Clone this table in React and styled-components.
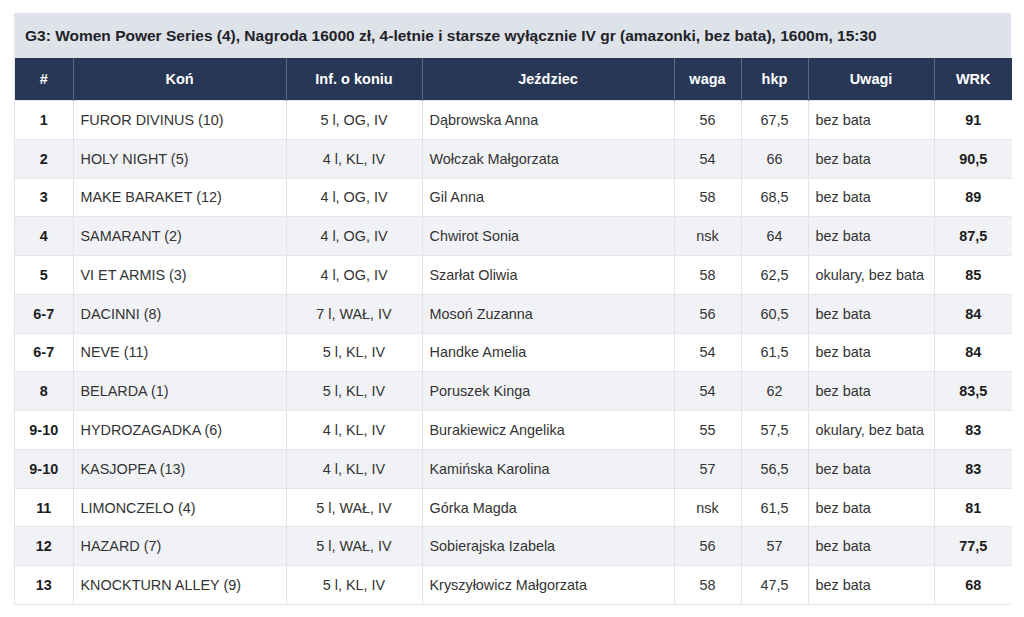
import React from "react";
import styled, { createGlobalStyle } from "styled-components";

const Global = createGlobalStyle`
  html, body { margin: 0; padding: 0; background: #ffffff; }
  body { font-family: "Liberation Sans", Arial, sans-serif; }
`;

const Page = styled.div`
  padding: 13px 0 0 14px;
`;

const Card = styled.div`
  width: 997px;
  border: 1px solid #e2e5e9;
  border-top: none;
  box-sizing: border-box;
`;

const Title = styled.div`
  height: 45px;
  background: #dee2e9;
  display: flex;
  align-items: center;
  padding-left: 10px;
  font-size: 15.5px;
  font-weight: bold;
  color: #1f2328;
  white-space: nowrap;
`;

const Table = styled.table`
  width: 100%;
  border-collapse: collapse;
  table-layout: fixed;
  font-size: 14.4px;
  color: #2b2b2b;
`;

const Th = styled.th`
  background: #283755;
  color: #ffffff;
  font-weight: bold;
  font-size: 14.5px;
  height: 42px;
  padding: 0;
  text-align: center;
  border-left: 1px solid #5a6984;
  &:first-child { border-left: none; }
`;

const Tr = styled.tr`
  height: 38.77px;
  background: ${(p) => (p.$alt ? "#f1f2f5" : "#ffffff")};
`;

const Td = styled.td`
  padding: 0 7px;
  border-left: 1px solid #e0e3e7;
  border-top: 1px solid #e3e6ea;
  text-align: ${(p) => p.$align || "center"};
  font-weight: ${(p) => (p.$bold ? "bold" : "normal")};
  color: ${(p) => (p.$bold ? "#1c1c1c" : "#333333")};
  white-space: nowrap;
  &:first-child { border-left: none; }
`;

const cols = [58, 213, 136, 252, 67, 67, 126, 78];

const rows = [
  ["1", "FUROR DIVINUS (10)", "5 l, OG, IV", "Dąbrowska Anna", "56", "67,5", "bez bata", "91"],
  ["2", "HOLY NIGHT (5)", "4 l, KL, IV", "Wołczak Małgorzata", "54", "66", "bez bata", "90,5"],
  ["3", "MAKE BARAKET (12)", "4 l, OG, IV", "Gil Anna", "58", "68,5", "bez bata", "89"],
  ["4", "SAMARANT (2)", "4 l, OG, IV", "Chwirot Sonia", "nsk", "64", "bez bata", "87,5"],
  ["5", "VI ET ARMIS (3)", "4 l, OG, IV", "Szarłat Oliwia", "58", "62,5", "okulary, bez bata", "85"],
  ["6-7", "DACINNI (8)", "7 l, WAŁ, IV", "Mosoń Zuzanna", "56", "60,5", "bez bata", "84"],
  ["6-7", "NEVE (11)", "5 l, KL, IV", "Handke Amelia", "54", "61,5", "bez bata", "84"],
  ["8", "BELARDA (1)", "5 l, KL, IV", "Poruszek Kinga", "54", "62", "bez bata", "83,5"],
  ["9-10", "HYDROZAGADKA (6)", "4 l, KL, IV", "Burakiewicz Angelika", "55", "57,5", "okulary, bez bata", "83"],
  ["9-10", "KASJOPEA (13)", "4 l, KL, IV", "Kamińska Karolina", "57", "56,5", "bez bata", "83"],
  ["11", "LIMONCZELO (4)", "5 l, WAŁ, IV", "Górka Magda", "nsk", "61,5", "bez bata", "81"],
  ["12", "HAZARD (7)", "5 l, WAŁ, IV", "Sobierajska Izabela", "56", "57", "bez bata", "77,5"],
  ["13", "KNOCKTURN ALLEY (9)", "5 l, KL, IV", "Kryszyłowicz Małgorzata", "58", "47,5", "bez bata", "68"],
];

const headers = ["#", "Koń", "Inf. o koniu", "Jeździec", "waga", "hkp", "Uwagi", "WRK"];
const aligns = ["center", "left", "center", "left", "center", "center", "left", "center"];
const bolds = [true, false, false, false, false, false, false, true];

export default function App() {
  return (
    <Page>
      <Global />
      <Card>
        <Title>
          G3: Women Power Series (4), Nagroda 16000 zł, 4-letnie i starsze wyłącznie IV gr (amazonki, bez bata), 1600m, 15:30
        </Title>
        <Table>
          <colgroup>
            {cols.map((w, i) => (
              <col key={i} style={{ width: w }} />
            ))}
          </colgroup>
          <thead>
            <tr>
              {headers.map((h) => (
                <Th key={h}>{h}</Th>
              ))}
            </tr>
          </thead>
          <tbody>
            {rows.map((r, i) => (
              <Tr key={i} $alt={i % 2 === 1}>
                {r.map((c, j) => (
                  <Td key={j} $align={aligns[j]} $bold={bolds[j]}>
                    {c}
                  </Td>
                ))}
              </Tr>
            ))}
          </tbody>
        </Table>
      </Card>
    </Page>
  );
}
